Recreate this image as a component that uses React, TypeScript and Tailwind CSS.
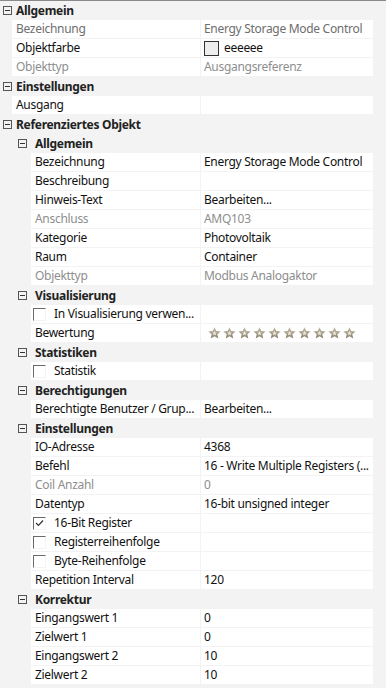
import React from "react";

type Row =
  | { t: "h"; level: 1 | 2; label: string }
  | {
      t: "i";
      level: 1 | 2;
      name: string;
      value?: string;
      nameCls?: string;
      valueCls?: string;
      kind?: "color" | "stars" | "check" | "checked";
    };

const G1 = "text-[#6e6e6e]";
const G2 = "text-[#8e8e8e]";

const rows: Row[] = [
  { t: "h", level: 1, label: "Allgemein" },
  { t: "i", level: 1, name: "Bezeichnung", value: "Energy Storage Mode Control", nameCls: G1, valueCls: G1 },
  { t: "i", level: 1, name: "Objektfarbe", value: "eeeeee", kind: "color" },
  { t: "i", level: 1, name: "Objekttyp", value: "Ausgangsreferenz", nameCls: G2, valueCls: G2 },
  { t: "h", level: 1, label: "Einstellungen" },
  { t: "i", level: 1, name: "Ausgang", value: "" },
  { t: "h", level: 1, label: "Referenziertes Objekt" },
  { t: "h", level: 2, label: "Allgemein" },
  { t: "i", level: 2, name: "Bezeichnung", value: "Energy Storage Mode Control" },
  { t: "i", level: 2, name: "Beschreibung", value: "" },
  { t: "i", level: 2, name: "Hinweis-Text", value: "Bearbeiten..." },
  { t: "i", level: 2, name: "Anschluss", value: "AMQ103", nameCls: G2, valueCls: G2 },
  { t: "i", level: 2, name: "Kategorie", value: "Photovoltaik" },
  { t: "i", level: 2, name: "Raum", value: "Container" },
  { t: "i", level: 2, name: "Objekttyp", value: "Modbus Analogaktor", nameCls: G2, valueCls: G2 },
  { t: "h", level: 2, label: "Visualisierung" },
  { t: "i", level: 2, name: "In Visualisierung verwen...", kind: "check" },
  { t: "i", level: 2, name: "Bewertung", kind: "stars" },
  { t: "h", level: 2, label: "Statistiken" },
  { t: "i", level: 2, name: "Statistik", kind: "check" },
  { t: "h", level: 2, label: "Berechtigungen" },
  { t: "i", level: 2, name: "Berechtigte Benutzer / Grup...", value: "Bearbeiten..." },
  { t: "h", level: 2, label: "Einstellungen" },
  { t: "i", level: 2, name: "IO-Adresse", value: "4368" },
  { t: "i", level: 2, name: "Befehl", value: "16 - Write Multiple Registers (..." },
  { t: "i", level: 2, name: "Coil Anzahl", value: "0", nameCls: G2, valueCls: G2 },
  { t: "i", level: 2, name: "Datentyp", value: "16-bit unsigned integer" },
  { t: "i", level: 2, name: "16-Bit Register", kind: "checked" },
  { t: "i", level: 2, name: "Registerreihenfolge", kind: "check" },
  { t: "i", level: 2, name: "Byte-Reihenfolge", kind: "check" },
  { t: "i", level: 2, name: "Repetition Interval", value: "120" },
  { t: "h", level: 2, label: "Korrektur" },
  { t: "i", level: 2, name: "Eingangswert 1", value: "0" },
  { t: "i", level: 2, name: "Zielwert 1", value: "0" },
  { t: "i", level: 2, name: "Eingangswert 2", value: "10" },
  { t: "i", level: 2, name: "Zielwert 2", value: "10" },
];

function Expander() {
  return (
    <div className="w-[9px] h-[9px] border border-[#555] flex items-center justify-center bg-transparent">
      <div className="w-[5px] h-px bg-[#333]" />
    </div>
  );
}

function Star() {
  return (
    <svg width="13" height="12" viewBox="0 0 13 12">
      <defs>
        <linearGradient id="sg" x1="0" y1="0" x2="0" y2="1">
          <stop offset="0" stopColor="#c4bca9" />
          <stop offset="1" stopColor="#877e68" />
        </linearGradient>
      </defs>
      <polygon
        points="6.5,0.2 8.3,4.0 12.6,4.4 9.3,7.2 10.3,11.6 6.5,9.2 2.7,11.6 3.7,7.2 0.4,4.4 4.7,4.0"
        fill="url(#sg)"
      />
      <polygon
        points="6.5,3.6 7.2,5.4 9.1,5.5 7.6,6.7 8.1,8.6 6.5,7.6 4.9,8.6 5.4,6.7 3.9,5.5 5.8,5.4"
        fill="#e9e5db"
      />
    </svg>
  );
}

function CheckBox({ checked }: { checked?: boolean }) {
  return (
    <div className="w-[13px] h-[13px] border-l border-t border-[#6a6a6a] border-r border-b border-r-[#f4f4f4] border-b-[#f4f4f4] bg-white flex items-center justify-center shrink-0">
      {checked && (
        <svg width="9" height="8" viewBox="0 0 9 8">
          <polyline points="1,4 3.5,6.5 8,1.5" fill="none" stroke="#333" strokeWidth="1.2" />
        </svg>
      )}
    </div>
  );
}

export default function App() {
  return (
    <div
      className="w-[386px] h-[688px] bg-[#f3f3f3] border-t border-[#8a8a8a] overflow-hidden text-[12px] tracking-[-0.3px] text-[#111] select-none"
      style={{ fontFamily: '"Noto Sans", "Open Sans", sans-serif' }}
    >
      {rows.map((r, idx) => {
        if (r.t === "h") {
          return (
            <div key={idx} className="flex items-center h-[19px] pr-[13px]">
              <div className={r.level === 1 ? "w-[16px] flex pl-[3px]" : "w-[35px] flex pl-[18px]"}>
                <Expander />
              </div>
              <div className="font-bold text-[#222] leading-[19px]">{r.label}</div>
            </div>
          );
        }
        const indent = r.level === 1 ? "w-[12px]" : "w-[31px]";
        const nameW = r.level === 1 ? "w-[188px]" : "w-[169px]";
        return (
          <div key={idx} className="flex h-[19px] pr-[13px]">
            <div className={`${indent} shrink-0`} />
            <div className="flex flex-1 gap-px pb-px">
              <div className={`${nameW} shrink-0 bg-white flex items-center overflow-hidden whitespace-nowrap`}>
                {r.kind === "check" || r.kind === "checked" ? (
                  <div className="flex items-center pl-[2px]">
                    <CheckBox checked={r.kind === "checked"} />
                    <span className="pl-[8px] leading-[18px]">{r.name}</span>
                  </div>
                ) : (
                  <span className={`pl-[4px] leading-[18px] ${r.nameCls ?? ""}`}>{r.name}</span>
                )}
              </div>
              <div className="flex-1 bg-white flex items-center overflow-hidden whitespace-nowrap">
                {r.kind === "color" ? (
                  <div className="flex items-center pl-[3px]">
                    <div className="w-[15px] h-[15px] border border-[#333] bg-[#eeeeee]" />
                    <span className="pl-[5px] leading-[18px]">{r.value}</span>
                  </div>
                ) : r.kind === "stars" ? (
                  <div className="flex items-center pl-[7px] gap-[2px]">
                    {Array.from({ length: 10 }).map((_, i) => (
                      <Star key={i} />
                    ))}
                  </div>
                ) : (
                  <span className={`pl-[3px] leading-[18px] ${r.valueCls ?? ""}`}>{r.value}</span>
                )}
              </div>
            </div>
          </div>
        );
      })}
    </div>
  );
}
